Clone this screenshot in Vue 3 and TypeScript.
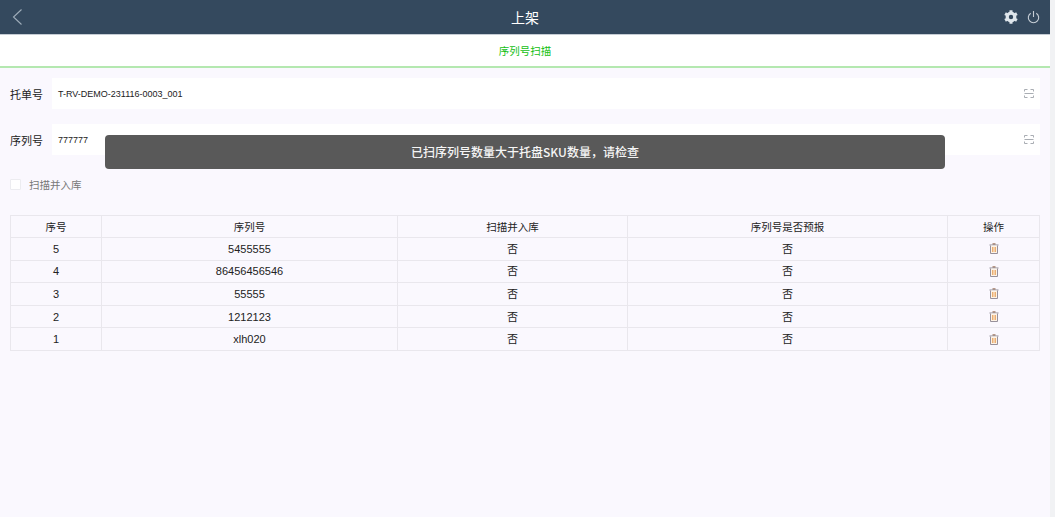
<script setup lang="ts">
const rows = [
  { no: 5, sn: '5455555' },
  { no: 4, sn: '86456456546' },
  { no: 3, sn: '55555' },
  { no: 2, sn: '1212123' },
  { no: 1, sn: 'xlh020' },
]
</script>

<template>
  <div class="page">
    <div class="main">
      <header class="topbar">
        <svg class="back" width="12" height="18" viewBox="0 0 12 18"><path d="M10.5 1.5 L2.5 9 L10.5 16.5" fill="none" stroke="#9fadba" stroke-width="1.1" /></svg>
        <span class="title">上架</span>
        <div class="top-icons">
          <svg width="14" height="14" viewBox="0 0 14 14"><circle cx="7" cy="7" r="3.8" fill="none" stroke="#dfe6ec" stroke-width="3.2" /><path d="M7 0.2V3M7 11V13.8M1.1 3.6 3.5 5M10.5 9 12.9 10.4M1.1 10.4 3.5 9M10.5 5 12.9 3.6" stroke="#dfe6ec" stroke-width="3" /></svg>
          <svg width="13" height="14" viewBox="0 0 13 14"><path d="M3.7 3.2A5.2 5.2 0 1 0 9.3 3.2M6.5 1V7" fill="none" stroke="#c6ced6" stroke-width="1.1" /></svg>
        </div>
      </header>
      <nav class="tab">序列号扫描</nav>
      <section class="form">
        <div class="row">
          <label>托单号</label>
          <div class="field">
            <span>T-RV-DEMO-231116-0003_001</span>
            <svg class="scan" width="10" height="9" viewBox="0 0 10 9"><path d="M0.5 2.5V0.5H3.5M6.5 0.5H9.5V2.5M0.5 6.5V8.5H3.5M6.5 8.5H9.5V6.5M0.5 4.5H9.5" fill="none" stroke="#a9adb3" stroke-width="1" /></svg>
          </div>
        </div>
        <div class="row">
          <label>序列号</label>
          <div class="field">
            <span>777777</span>
            <svg class="scan" width="10" height="9" viewBox="0 0 10 9"><path d="M0.5 2.5V0.5H3.5M6.5 0.5H9.5V2.5M0.5 6.5V8.5H3.5M6.5 8.5H9.5V6.5M0.5 4.5H9.5" fill="none" stroke="#a9adb3" stroke-width="1" /></svg>
          </div>
        </div>
        <div class="check">
          <i class="box"></i>
          <span>扫描并入库</span>
        </div>
      </section>
      <table class="grid">
        <colgroup>
          <col class="c1" /><col class="c2" /><col class="c3" /><col class="c4" /><col class="c5" />
        </colgroup>
        <thead>
          <tr><th>序号</th><th>序列号</th><th>扫描并入库</th><th>序列号是否预报</th><th>操作</th></tr>
        </thead>
        <tbody>
          <tr v-for="r in rows" :key="r.no">
            <td>{{ r.no }}</td>
            <td>{{ r.sn }}</td>
            <td>否</td>
            <td>否</td>
            <td>
              <svg class="trash" width="10" height="11" viewBox="0 0 10 11">
                <path d="M3.5 1H6.5" stroke="#8a5a3c" stroke-width="1.2" />
                <path d="M0.5 2H9.5" stroke="#8f8a94" stroke-width="1" />
                <path d="M1.5 2.5V10.5H8.5V2.5" fill="#fdf3e6" stroke="#97909b" stroke-width="1" />
                <path d="M3.5 4V9M5 4V9M6.5 4V9" stroke="#e9a764" stroke-width="0.9" />
              </svg>
            </td>
          </tr>
        </tbody>
      </table>
    </div>
    <div class="toast">已扫序列号数量大于托盘SKU数量，请检查</div>
  </div>
</template>

<style>
html, body { margin: 0; padding: 0; background: #f2f3f5; }
</style>

<style scoped>
.page {
  position: relative;
  width: 1055px;
  height: 517px;
  overflow: hidden;
  font-family: "Noto Sans CJK SC", "Liberation Sans", sans-serif;
  color: #222;
  background: #f1f2f4;
}
.main {
  width: 1050px;
  height: 517px;
  background: #faf8fe;
}
.topbar {
  height: 34px;
  background: #34495e;
  border-bottom: 1px solid #c5ccd4;
  display: flex;
  align-items: center;
  justify-content: space-between;
  padding: 0 10px 0 11px;
  position: relative;
}
.title {
  position: absolute;
  left: 0;
  right: 0;
  text-align: center;
  color: #fff;
  font-size: 14px;
}
.top-icons { display: flex; gap: 9px; align-items: center; }
.tab {
  height: 31px;
  line-height: 32px;
  background: #fff;
  border-bottom: 2px solid #b4e8b0;
  text-align: center;
  color: #14c014;
  font-size: 10.5px;
}
.form { padding: 10px 10px 0; }
.row {
  display: flex;
  align-items: center;
  height: 31px;
  margin-bottom: 15px;
}
.row label {
  width: 42px;
  flex: none;
  font-size: 11px;
  color: #222;
}
.field {
  flex: 1;
  height: 31px;
  background: #fff;
  display: flex;
  align-items: center;
  justify-content: space-between;
  padding: 0 6px 0 6px;
  font-family: "Liberation Sans", sans-serif;
  font-size: 9px;
  color: #222;
}
.check {
  display: flex;
  align-items: center;
  gap: 8px;
  height: 12px;
  margin-top: 23px;
  font-size: 10.5px;
  color: #777;
}
.box {
  width: 9px;
  height: 9px;
  border: 1px solid #ececf0;
  background: #fff;
  border-radius: 1px;
}
.grid {
  margin: 25px 0 0 10px;
  width: 1029px;
  table-layout: fixed;
  border-collapse: collapse;
  font-size: 11px;
  color: #222;
}
.c1 { width: 91px; }
.c2 { width: 296px; }
.c3 { width: 230px; }
.c4 { width: 320px; }
.c5 { width: 92px; }
.grid th, .grid td {
  border: 1px solid #e9e7ed;
  padding: 0;
  text-align: center;
  font-weight: 400;
  vertical-align: middle;
  line-height: 14px;
}
.grid th { font-size: 10.5px; height: 21px; }
.grid td { height: 21.6px; font-family: "Liberation Sans", "Noto Sans CJK SC", sans-serif; }
.trash { display: block; margin: 0 auto; }
.toast {
  position: absolute;
  left: 105px;
  top: 135px;
  width: 840px;
  height: 34px;
  line-height: 34px;
  background: #595959;
  border-radius: 4px;
  color: #f5f5f5;
  text-align: center;
  font-size: 12px;
  font-weight: 500;
}
</style>
